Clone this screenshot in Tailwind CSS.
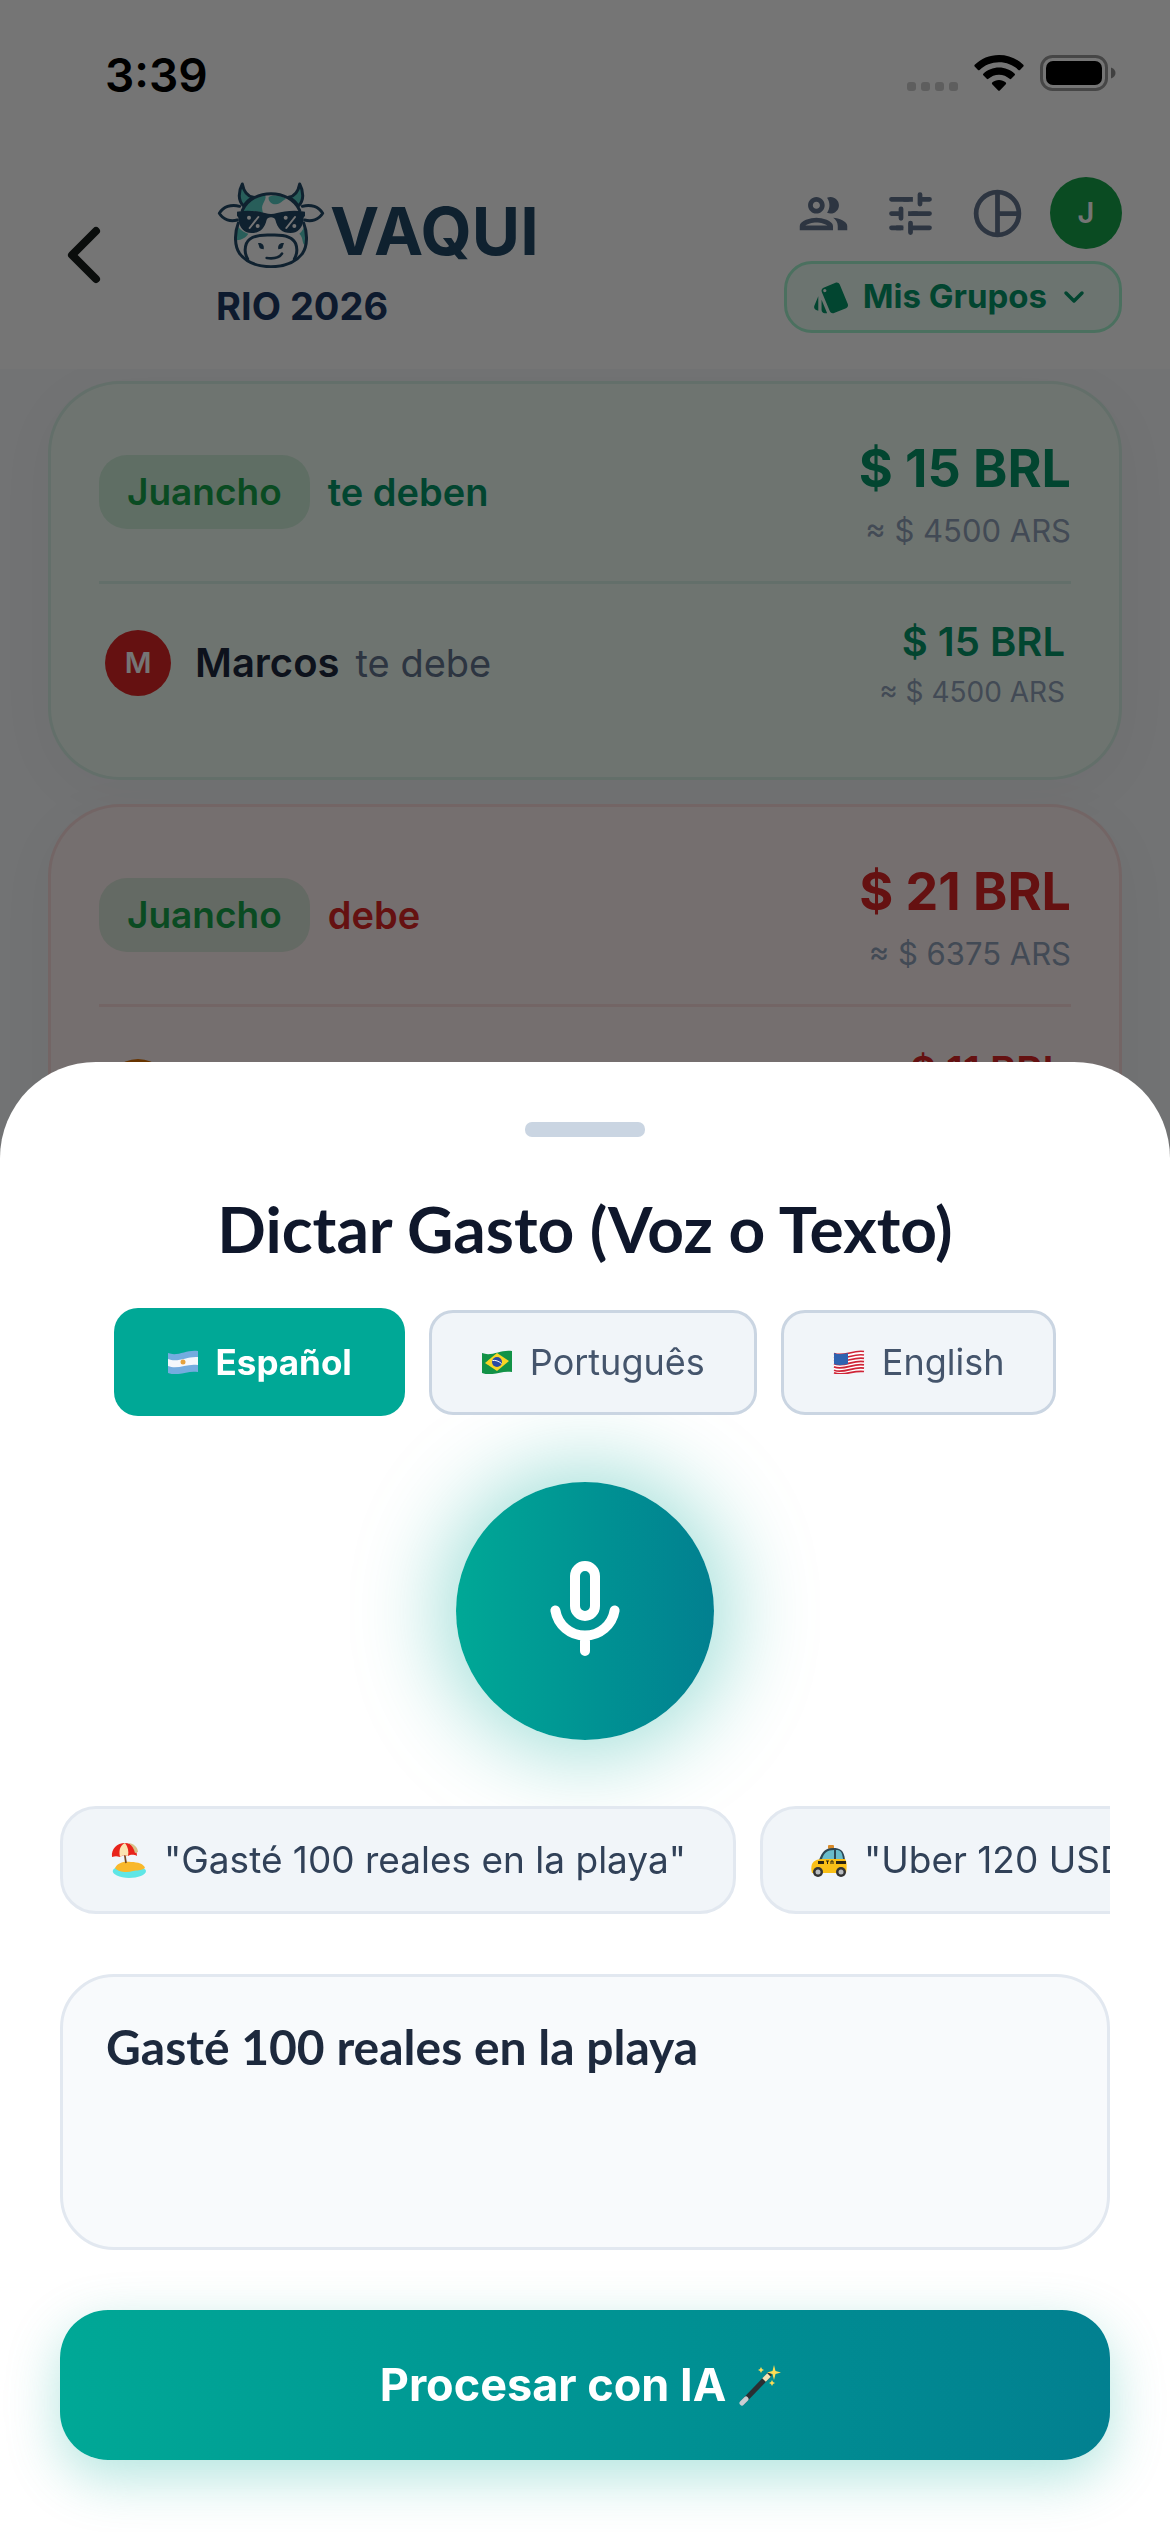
<!DOCTYPE html>
<html lang="es">
<head>
  <meta charset="UTF-8" />
  <meta name="viewport" content="width=device-width, initial-scale=1.0"/>
  <title>Vaqui - Dictar Gasto</title>
  <script src="https://cdn.jsdelivr.net/npm/@tailwindcss/browser@4"></script>
</head>
<body class="bg-slate-50 font-['Inter',sans-serif]">

  <div class="relative h-screen w-full overflow-hidden">

    <!-- Status bar + header -->
    <header class="relative z-10 bg-white">
      <div class="flex h-[141px] items-start justify-between pt-12 pr-[54px] pl-[105px]">
        <span class="text-[46px] leading-[54px] font-semibold text-black">3:39</span>
        <div class="flex items-center pt-[7px]">
          <svg class="mr-[15px] h-9 w-[54px]" viewBox="0 0 54 36" fill="#000" fill-opacity=".2">
            <rect x="2" y="27" width="9" height="9" rx="3"/><rect x="16" y="27" width="9" height="9" rx="3"/><rect x="30" y="27" width="9" height="9" rx="3"/><rect x="44" y="27" width="9" height="9" rx="3"/>
          </svg>
          <svg class="mr-4 h-9 w-[50px]" viewBox="0 0 50 36">
            <path d="M25 0C34.500 0 43 3.700 49.300 9.800c.5.500.5 1.200 0 1.700l-3.300 3.400c-.5.500-1.100.5-1.600 0C39.300 10.100 32.500 7.300 25 7.300S10.700 10.100 5.600 14.900c-.5.5-1.100.5-1.600 0L.7 11.500c-.5-.5-.5-1.200 0-1.700C7 3.700 15.500 0 25 0Z"/>
            <path d="M25 12.500c6 0 11.500 2.300 15.700 6.200.5.500.5 1.100 0 1.600l-3.500 3.500c-.4.500-1.100.5-1.600 0-2.800-2.500-6.500-4.100-10.600-4.100s-7.800 1.600-10.600 4.100c-.5.500-1.200.5-1.600 0l-3.500-3.500c-.5-.5-.5-1.100 0-1.600 4.200-3.900 9.700-6.200 15.700-6.200Z"/>
            <path d="M25 25c2.600 0 5 1 6.800 2.600.5.500.5 1.100 0 1.600l-6 6.200c-.4.500-1.100.5-1.600 0l-6-6.200c-.5-.5-.5-1.100 0-1.600C20 26 22.400 25 25 25Z"/>
          </svg>
          <svg class="h-9 w-[76px]" viewBox="0 0 76 36">
            <rect x="1.500" y="1.500" width="65" height="33" rx="11" fill="none" stroke="#000" stroke-opacity=".4" stroke-width="3"/>
            <rect x="6" y="6" width="56" height="24" rx="7"/>
            <path d="M71 12.500c3 1 4.500 3.300 4.500 5.500S74 22.500 71 23.500Z" fill-opacity=".45"/>
          </svg>
        </div>
      </div>

      <div class="flex h-[228px] items-center justify-between pr-12 pl-[60px]">
        <div class="flex items-center gap-[108px]">
          <button type="button" aria-label="Volver">
            <svg class="h-[58px] w-12" viewBox="0 0 48 58" fill="none" stroke="#171d1b" stroke-width="8" stroke-linecap="round" stroke-linejoin="round"><path d="M36 5 12 29l24 24"/></svg>
          </button>
          <div class="flex flex-col gap-4">
            <div class="flex items-center gap-1">
              <svg class="h-[86px] w-[110px]" viewBox="26 37 328 258" fill="none" stroke="#214866" stroke-width="9" stroke-linecap="round" stroke-linejoin="round">
                <g fill="#57cec4">
                  <path d="M104 43c-12 22-14 50 4 66 8-12 16-20 29-26-17-3-29-19-33-40Z"/>
                  <path d="M276 43c12 22 14 50-4 66-8-12-16-20-29-26 17-3 29-19 33-40Z"/>
                </g>
                <g fill="#57cec4" stroke="none">
                  <path d="M104 124c12-28 36-46 66-51 10 12-2 22-6 35-2 8 0 14 2 22-20-6-42-6-62-6Z"/>
                  <path d="M183 82c16-8 42-4 52 6-10 4-16 14-30 16-14 1-24-10-22-22Z"/>
                  <path d="M90 168c6 12 20 20 32 24-8 12-18 18-36 20-2-16-1-30 4-44Z"/>
                  <path d="M291 166c8 18 8 40 4 60-14 0-6-22-20-34 8-6 14-16 16-26Z"/>
                </g>
                <path d="M96 110c-26-8-50 2-61 21 12 20 34 26 54 20M284 110c26-8 50 2 61 21-12 20-34 26-54 20"/>
                <path d="M104 122c16-34 50-50 86-50s70 16 86 50M92 160c-12 30-12 68 4 92 20 26 56 39 94 39s74-13 94-39c16-24 16-62 4-92"/>
                <path d="M190 196c-44-2-66 6-74 26-6 16-4 32 4 46M190 196c44-2 66 6 74 26 6 16 4 32-4 46"/>
                <path d="M177 265c16 2 38 0 46-13" stroke-width="8"/>
                <path d="M88 126c30-6 64-2 84 4 12 4 24 4 36 0 20-6 54-10 84-4v14c-4 0-4 4-5 12-4 26-18 38-38 38-26 0-40-14-46-40-2-10-24-10-26 0-6 26-20 40-46 40-20 0-34-12-38-38-1-8-1-12-5-12Z" fill="#214866" stroke="none"/>
                <path d="m152 142-26 33M262 142l-26 33" stroke="#fff" stroke-width="6"/>
                <g fill="#fff" stroke="none"><circle cx="124" cy="144" r="6"/><circle cx="150" cy="169" r="6"/><circle cx="234" cy="144" r="6"/><circle cx="260" cy="169" r="6"/></g>
                <g fill="#214866" stroke="none"><path d="M151 220c12-2 20 6 17 19-4-2-12 0-13-7Z"/><path d="M229 220c-12-2-20 6-17 19 4-2 12 0 13-7Z"/></g>
              </svg>
              <span class="pt-3 text-[66px] leading-[66px] font-bold text-[#214866]">VAQUI</span>
            </div>
            <span class="text-[38px] leading-[44px] font-bold text-[#1e3a64]">RIO 2026</span>
          </div>
        </div>

        <div class="flex flex-col items-end gap-3">
          <div class="flex items-center gap-[30px] text-slate-500">
            <button type="button" aria-label="Miembros">
              <svg class="size-[57px]" viewBox="0 0 24 24" fill="currentColor"><path d="M9 13.750c-2.340 0-7 1.170-7 3.500V19h14v-1.750c0-2.330-4.660-3.500-7-3.500zM4.340 17c.84-.58 2.870-1.250 4.660-1.250s3.820.67 4.660 1.250H4.340zM9 12c1.930 0 3.500-1.570 3.500-3.500S10.930 5 9 5 5.500 6.570 5.500 8.500 7.070 12 9 12zm0-5c.83 0 1.500.67 1.500 1.500S9.830 10 9 10s-1.500-.67-1.500-1.500S8.170 7 9 7zm7.040 6.810c1.160.84 1.960 1.960 1.960 3.440V19h4v-1.750c0-2.020-3.500-3.170-5.960-3.440zM15 12c1.930 0 3.500-1.570 3.500-3.500S16.930 5 15 5c-.54 0-1.040.13-1.500.35.63.89 1 1.980 1 3.150s-.37 2.260-1 3.150c.46.22.96.35 1.500.35z"/></svg>
            </button>
            <button type="button" aria-label="Ajustes">
              <svg class="size-[57px]" viewBox="0 0 24 24" fill="none" stroke="currentColor" stroke-width="2"><path stroke-linecap="round" d="M4 6h7M16 4v4M16 6h4M8 10v4M4 12h4M13 12h7M4 18h4M12 16v4M12 18h8"/><path d="M9 6h4M11 12h4M6 18h3"/></svg>
            </button>
            <div class="flex items-center gap-6">
              <button type="button" aria-label="Resumen">
                <svg class="size-[57px]" viewBox="0 0 24 24" fill="none" stroke="currentColor" stroke-width="2"><circle cx="12" cy="12" r="9"/><path d="M12 3v18M12 12h9"/></svg>
              </button>
              <button type="button" class="size-[72px] rounded-full bg-[#16a34a] text-[29px] font-semibold text-white">J</button>
            </div>
          </div>
          <button type="button" class="flex h-[72px] items-center rounded-[28px] border-3 border-emerald-200 bg-emerald-50 pr-[30px] pl-[25px] text-[33px] font-bold text-[#059669]">
            <svg class="mr-3 size-[39px]" viewBox="0 0 24 24" fill="currentColor"><path d="M2.530 19.650l1.340.56v-9.030l-2.430 5.860c-.41 1.020.08 2.190 1.090 2.610zm19.500-3.700L17.070 3.980c-.31-.75-1.040-1.210-1.810-1.230-.26 0-.53.04-.79.15L7.100 5.950c-.75.31-1.210 1.030-1.230 1.800-.01.27.04.54.15.8l4.960 11.970c.31.76 1.050 1.220 1.830 1.230.26 0 .52-.05.77-.15l7.360-3.050c1.020-.42 1.510-1.590 1.090-2.600zM7.880 8.750c-.55 0-1-.45-1-1s.45-1 1-1 1 .45 1 1-.45 1-1 1zm-2 11c0 1.100.9 2 2 2h1.450l-3.450-8.340v6.340z"/></svg>
            Mis Grupos
            <svg class="ml-3 size-[30px]" viewBox="0 0 30 30" fill="none" stroke="currentColor" stroke-width="3.500" stroke-linecap="round" stroke-linejoin="round"><path d="m7 11 8 8 8-8"/></svg>
          </button>
        </div>
      </div>
    </header>

    <!-- Balances -->
    <main class="flex flex-col gap-6 px-12 pt-3">
      <section class="h-[399px] rounded-[72px] border-3 border-[#059669]/10 bg-green-50 px-12 pt-12 shadow-[0_12px_60px_rgba(15,23,42,0.04)]">
        <div class="flex h-[149px] justify-between">
          <div class="mt-[23px] flex h-[74px] items-center gap-[18px]">
            <span class="flex h-[74px] items-center rounded-[28px] bg-[#16a34a]/15 px-7 text-[37px] font-semibold text-[#16a34a]">Juancho</span>
            <span class="text-[38px] font-semibold text-[#059669]">te deben</span>
          </div>
          <div class="pt-1 text-right">
            <p class="text-[52px] leading-[66px] font-bold text-[#059669]">$ 15 BRL</p>
            <p class="pt-2 text-[31px] leading-[42px] text-slate-400">≈ $ 4500 ARS</p>
          </div>
        </div>
        <hr class="border-t-3 border-[#059669]/10"/>
        <div class="flex items-start justify-between px-[6px] pt-[34px]">
          <div class="flex items-center pt-3">
            <span class="mr-6 flex size-[66px] items-center justify-center rounded-full bg-[#dc2626] text-[29px] font-semibold text-white">M</span>
            <span class="mr-4 text-[40px] font-semibold text-slate-800">Marcos</span>
            <span class="text-[38px] text-slate-500">te debe</span>
          </div>
          <div class="text-right">
            <p class="text-[40px] leading-[48px] font-semibold text-[#059669]">$ 15 BRL</p>
            <p class="pt-1 text-[28px] leading-[44px] text-slate-400">≈ $ 4500 ARS</p>
          </div>
        </div>
      </section>

      <section class="h-[600px] rounded-[72px] border-3 border-[#dc2626]/10 bg-red-50 px-12 pt-12 shadow-[0_12px_60px_rgba(15,23,42,0.04)]">
        <div class="flex h-[149px] justify-between">
          <div class="mt-[23px] flex h-[74px] items-center gap-[18px]">
            <span class="flex h-[74px] items-center rounded-[28px] bg-[#16a34a]/15 px-7 text-[37px] font-semibold text-[#16a34a]">Juancho</span>
            <span class="text-[38px] font-semibold text-[#dc2626]">debe</span>
          </div>
          <div class="pt-1 text-right">
            <p class="text-[52px] leading-[66px] font-bold text-[#dc2626]">$ 21 BRL</p>
            <p class="pt-2 text-[31px] leading-[42px] text-slate-400">≈ $ 6375 ARS</p>
          </div>
        </div>
        <hr class="border-t-3 border-[#dc2626]/10"/>
        <div class="flex items-start justify-between px-[6px] pt-10">
          <div class="pt-3">
            <span class="block size-[66px] rounded-full bg-amber-600"></span>
          </div>
          <p class="text-[40px] leading-[48px] font-semibold text-[#dc2626]">$ 11 BRL</p>
        </div>
      </section>
    </main>

    <!-- Bottom sheet -->
    <div class="fixed inset-0 z-20 flex items-end bg-black/54">
      <div class="w-full rounded-t-[96px] bg-white px-[60px] pt-[60px] pb-[72px]">
        <div class="mx-auto h-[15px] w-[120px] rounded-[7px] bg-slate-300"></div>
        <h2 class="pt-[54px] text-center font-['Lato','Inter',sans-serif] text-[64px] leading-[76px] font-bold text-slate-900">Dictar Gasto (Voz o Texto)</h2>

        <div class="flex items-center justify-center gap-6 pt-[41px] text-[36px]">
          <button type="button" class="flex h-[108px] items-center gap-[17px] rounded-[24px] bg-[#00a896] px-[53px] text-[35px] font-bold text-white">
            <svg class="h-6 w-[32px]" viewBox="0 0 32 24">
              <path d="M1 3c10 4 19-4 30-2v21c-11-2-20 5-30 1Z" fill="#74acdf"/>
              <path d="M1 9c10 4 19-3 30-2v8c-11-2-20 5-30 1Z" fill="#f4f7fb"/>
              <circle cx="16" cy="12" r="2.500" fill="#e5a23c"/>
            </svg>
            Español
          </button>
          <button type="button" class="flex h-[105px] items-center gap-[17px] rounded-[24px] border-3 border-slate-300 bg-slate-100 px-[49px] text-slate-600">
            <svg class="h-6 w-[32px]" viewBox="0 0 32 24">
              <path d="M1 3c10 4 19-4 30-2v21c-11-2-20 5-30 1Z" fill="#129247"/>
              <path d="m16 3 12 8-12 10L4 13Z" fill="#f8d525"/>
              <circle cx="16" cy="12" r="5" fill="#2b49a3"/>
              <path d="M11.500 10.500c3-.5 6 .5 9 3" fill="none" stroke="#fff"/>
            </svg>
            Português
          </button>
          <button type="button" class="flex h-[105px] items-center gap-[17px] rounded-[24px] border-3 border-slate-300 bg-slate-100 px-[49px] text-slate-600">
            <svg class="h-6 w-[32px]" viewBox="0 0 32 24">
              <path d="M1 3c10 4 19-4 30-2v21c-11-2-20 5-30 1Z" fill="#fff"/>
              <path d="M1 3.500c10 4 19-4 30-2M1 7c10 4 19-4 30-2M1 10.300c10 4 19-4 30-2M1 13.600c10 4 19-4 30-2M1 16.900c10 4 19-4 30-2M1 20.200c10 4 19-4 30-2M1 22.800c10 4 19-3 30-1.300" fill="none" stroke="#cf2437" stroke-width="1.700"/>
              <path d="M1 3c5 2 9 1 14 0v11c-5 1-9 2-14 0Z" fill="#2f62b0"/>
            </svg>
            English
          </button>
        </div>

        <button type="button" aria-label="Dictar" class="mx-auto mt-[66px] flex size-[258px] items-center justify-center rounded-full bg-linear-to-r from-[#00a896] to-[#028090] shadow-[0_0_90px_12px_rgba(0,168,150,0.4)]">
          <svg class="size-[120px]" viewBox="0 0 24 24" fill="none" stroke="#fff" stroke-width="2" stroke-linecap="round">
            <rect x="10" y="3" width="4" height="10" rx="2"/>
            <path d="M6.080 11.900a6 6 0 0 0 11.840 0M12 17v3"/>
          </svg>
        </button>

        <div class="flex gap-6 overflow-hidden pt-[66px] text-[37px] whitespace-nowrap text-slate-700">
          <button type="button" class="flex h-[108px] shrink-0 items-center gap-4 rounded-[36px] border-3 border-slate-200 bg-slate-100 px-[47px]">
            <svg class="h-9 w-[38px]" viewBox="0 0 38 36">
              <path d="M3 28c2-4 9-3 16-3s17 0 17 4-8 7-17 7S1 32 3 28Z" fill="#5fe6e6"/>
              <path d="M5 26c3-6 10-7 16-6 7 0 13 2 14 6-4 3-8 2-12 3-6 2-15 1-18-3Z" fill="#f9b82b"/>
              <path d="m14 8 2 13" stroke="#7a4a22" stroke-width="1.700"/>
              <path d="M2 15C1 7 7 1 15 1c7 0 12 6 12 13-4-2-7-1-9 0-4-1-5-1-8 1-3-1-5-1-8 0Z" fill="#e8231b"/>
              <path d="M15 1C9 4 9 10 10 15c3-2 4-2 8-1 1-5 0-9-3-13Z" fill="#fbe3b1"/>
              <path d="M18 1c5 0 10 4 10 9l-3 1c-1-4-3-8-7-10Z" fill="#d8c087"/>
            </svg>
            "Gasté 100 reales en la playa"
          </button>
          <button type="button" class="flex h-[108px] shrink-0 items-center gap-4 rounded-[36px] border-3 border-slate-200 bg-slate-100 px-[47px]">
            <svg class="h-9 w-[38px]" viewBox="0 0 38 36">
              <rect x="18" y="3" width="6" height="4" rx="1" fill="#d98b2b"/>
              <path d="M9 18c3-8 6-12 14-12 7 0 11 2 12 12Z" fill="#2c4654"/>
              <path d="M12 17c2-6 5-9 12-9v9ZM26 8c5 0 6 2 7 9h-7Z" fill="#69bccb"/>
              <path d="M2 22c2-4 6-5 12-5h21c2 2 2 9 1 14H2c-1-3-1-6 0-9Z" fill="#f9bf17"/>
              <path d="M8 19h28v3H8Z" fill="#2b2412"/><path d="M14 18h12v5H14Z" fill="#f9bf17"/>
              <path d="M16 19h3M17.500 19v3M21 22v-3h2v3" stroke="#2b2412" fill="none"/>
              <circle cx="8" cy="30" r="5" fill="#333"/><circle cx="31" cy="30" r="5" fill="#333"/>
              <circle cx="8" cy="30" r="2.500" fill="#b8bcc0"/><circle cx="31" cy="30" r="2.500" fill="#b8bcc0"/>
            </svg>
            "Uber 120 USD"
          </button>
        </div>

        <textarea id="gasto" aria-label="Gasto" class="mt-[60px] block h-[276px] w-full resize-none rounded-[54px] border-3 border-slate-200 bg-slate-50 px-[43px] pt-[43px] font-['Lato','Inter',sans-serif] text-[48px] leading-[54px] font-bold text-slate-800 outline-none">Gasté 100 reales en la playa</textarea>

        <button type="submit" class="mt-[60px] flex h-[150px] w-full items-center justify-center gap-3 rounded-[48px] bg-linear-to-r from-[#00a896] to-[#028090] pr-2 text-[45px] font-bold text-white shadow-[0_18px_54px_rgba(0,168,150,0.3)]">
          Procesar con IA
          <svg class="size-[44px]" viewBox="0 0 44 44">
            <path d="m5 39 26-27" stroke="#2a2f33" stroke-width="5" stroke-linecap="round"/>
            <path d="m4 40 4-4" stroke="#c9ced3" stroke-width="5" stroke-linecap="round"/>
            <path d="m26 17 5-5" stroke="#f3e3b4" stroke-width="5"/>
            <path d="m36 2 1.500 6 5.500 1.500-5.500 1.500L36 17l-1.500-6L29 9.500 34.500 8ZM23 4l1 2 2 1-2 1-1 2-1-2-2-1 2-1ZM34 17l1 2 2 1-2 1-1 2-1-2-2-1 2-1Z" fill="#fbdc55"/>
          </svg>
        </button>
      </div>
    </div>
  </div>

</body>
</html>
